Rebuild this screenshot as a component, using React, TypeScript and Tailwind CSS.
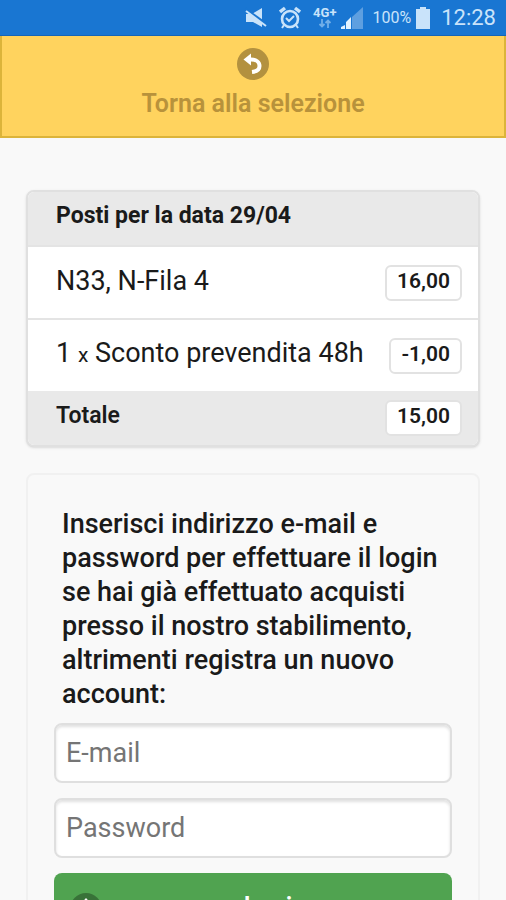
import React, { useState } from 'react';

const CARD_ROWS = [
  { label: <>N33, N-Fila 4</>, price: '16,00' },
  { label: <>1 <span className="text-[21px]">x</span> Sconto prevendita 48h</>, price: '-1,00' },
];

const StatusBar: React.FC = () => (
  <div className="h-9 bg-[#1976d2] border-b border-[#1565b8] flex items-center justify-end pr-[10px] text-[#c9e3fa]">
    <svg width="22" height="22" viewBox="0 0 22 22" className="mr-3" aria-hidden="true">
      <path d="M1 7h6l10-6v19l-9-5H1z" fill="#c9e3fa" />
      <path d="M0 2l21 15" stroke="#1976d2" strokeWidth="3" />
      <path d="M1 4l20 15" stroke="#c9e3fa" strokeWidth="2" />
    </svg>
    <svg width="22" height="24" viewBox="0 0 22 24" fill="none" stroke="#c9e3fa" className="mr-3" aria-hidden="true">
      <circle cx="11" cy="13" r="8" strokeWidth="2.6" />
      <path d="M1 6l5-4M21 6l-5-4" strokeWidth="3.4" />
      <path d="M7 12l3 3 5-5" strokeWidth="2" />
      <path d="M5 19l-2 3M17 19l2 3" strokeWidth="2" />
    </svg>
    <div className="flex flex-col items-center mr-1">
      <span className="text-[13px] leading-3 font-bold">4G+</span>
      <svg width="14" height="9" viewBox="0 0 14 9" fill="none" stroke="#72afe8" strokeWidth="1.8" aria-hidden="true">
        <path d="M4 0v7M1.500 5L4 7.500 6.500 5M10 9V2M7.500 4L10 1.500 12.500 4" />
      </svg>
    </div>
    <svg width="22" height="22" viewBox="0 0 22 22" className="mr-[10px]" aria-hidden="true">
      <path d="M0 22v-2l4-2v4zM5 22v-7l5-5v12z" fill="#e3f2ff" />
      <path d="M11 22V10L22 0v22z" fill="#5e9fe0" />
    </svg>
    <span className="text-base leading-6 mr-1">100%</span>
    <svg width="16" height="22" viewBox="0 0 16 22" fill="#c9e3fa" className="mr-[10px]" aria-hidden="true">
      <path d="M5 0h6v2h4v20H1V2h4z" />
    </svg>
    <span className="text-[22px] leading-6">12:28</span>
  </div>
);

const Price: React.FC<{ value: string }> = ({ value }) => (
  <span className="shrink-0 h-9 flex items-center bg-white border-2 border-[#e2e2e2] rounded-md px-[10px] pb-1 text-[21px] leading-8 font-semibold">
    {value}
  </span>
);

const App: React.FC = () => {
  const [email, setEmail] = useState('');
  const [password, setPassword] = useState('');

  const inputStyle =
    'block w-full h-15 rounded-lg border-2 border-[#dfdfdf] bg-white px-[10px] text-[27px] text-[#222] placeholder:text-[#757575] shadow-[inset_0_2px_3px_rgba(0,0,0,0.12)] outline-none';

  return (
    <div className="min-h-screen bg-[#f9f9f9] text-[#1a1a1a] font-['Roboto',sans-serif]">
      <StatusBar />

      <button
        type="button"
        className="w-full h-[102px] bg-[#ffd35e] border-2 border-t-0 border-[#dcb43a] flex flex-col items-center pt-3 text-[#b8923b]"
      >
        <svg width="32" height="32" viewBox="0 0 32 32" aria-hidden="true">
          <circle cx="16" cy="16" r="16" fill="#b3913f" />
          <path d="M12 11.500h2c5 0 8.500 2.500 8.500 6.500 0 3.500-3 5.500-7.500 6" fill="none" stroke="#fff" strokeWidth="4" />
          <path d="M6.500 11.500l7.500-6v12z" fill="#fff" />
        </svg>
        <span className="mt-2 text-[25px] leading-8 font-semibold">Torna alla selezione</span>
      </button>

      <main className="px-[26px] pt-[52px] pb-8">
        <section className="rounded-lg border-2 border-[#e0e0e0] bg-white overflow-hidden shadow-sm">
          <h2 className="h-[53px] bg-[#e9e9e9] px-7 pb-1 flex items-center text-[23px] font-bold">
            Posti per la data 29/04
          </h2>
          {CARD_ROWS.map((row) => (
            <div
              key={row.price}
              className="h-[73px] border-t-2 border-[#e4e4e4] flex items-center justify-between pl-7 pr-4"
            >
              <span className="text-[27px] leading-9 pb-1 whitespace-nowrap">{row.label}</span>
              <Price value={row.price} />
            </div>
          ))}
          <div className="h-[54px] bg-[#e9e9e9] flex items-center justify-between pl-7 pr-4 text-[23px] font-semibold">
            <span className="pb-1">Totale</span>
            <Price value="15,00" />
          </div>
        </section>

        <form
          onSubmit={(e) => e.preventDefault()}
          className="mt-[26px] rounded-lg border-2 border-[#f1f1f1] px-[26px] py-8"
        >
          <p className="pl-2 text-[27px] leading-[34px] font-medium">
            Inserisci indirizzo e-mail e password per effettuare il login se hai già effettuato acquisti
            presso il nostro stabilimento, altrimenti registra un nuovo account:
          </p>
          <div className="mt-3 flex flex-col gap-[15px]">
            <input
              type="email"
              aria-label="E-mail"
              placeholder="E-mail"
              value={email}
              onChange={(e) => setEmail(e.target.value)}
              className={inputStyle}
            />
            <input
              type="password"
              aria-label="Password"
              placeholder="Password"
              value={password}
              onChange={(e) => setPassword(e.target.value)}
              className={inputStyle}
            />
            <button
              type="submit"
              className="h-[72px] rounded-lg bg-[#50a350] text-white text-[25px] font-semibold flex items-center pl-4 pr-1"
            >
              <svg width="32" height="32" viewBox="0 0 32 32" aria-hidden="true">
                <circle cx="16" cy="16" r="16" fill="#387238" />
                <path d="M16 5l9 10h-5v11h-8V15H7z" fill="#fff" />
              </svg>
              <span className="grow pb-1 text-center">Login</span>
            </button>
          </div>
        </form>
      </main>
    </div>
  );
};

export default App;
